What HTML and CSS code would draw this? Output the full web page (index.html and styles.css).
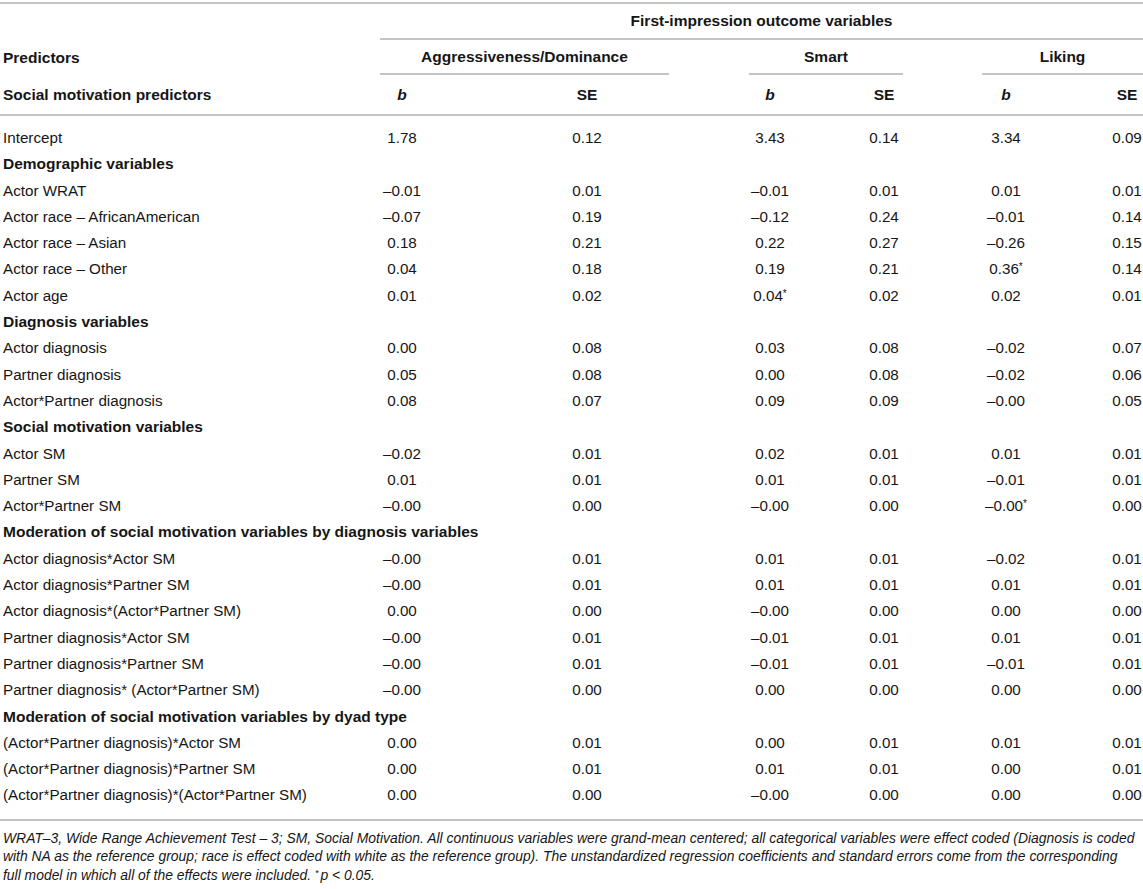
FILE: index.html
```html
<!DOCTYPE html>
<html lang="en">
<head>
<meta charset="utf-8">
<title>First-impression outcome variables</title>
<link rel="stylesheet" href="styles.css">
</head>
<body>
<table class="results">
  <colgroup>
    <col class="c-label">
    <col class="c-b1">
    <col class="c-se1">
    <col class="c-b2">
    <col class="c-se2">
    <col class="c-b3">
    <col class="c-se3">
  </colgroup>
  <thead>
    <tr class="row-top">
      <th class="blank"></th>
      <th colspan="6" class="outcome">First-impression outcome variables</th>
    </tr>
    <tr class="row-groups">
      <th class="label">Predictors</th>
      <th colspan="2" class="grp-cell"><span class="grp grp-aggr">Aggressiveness/Dominance</span></th>
      <th colspan="2" class="grp-cell"><span class="grp grp-smart">Smart</span></th>
      <th colspan="2" class="grp-cell"><span class="grp grp-liking">Liking</span></th>
    </tr>
    <tr class="row-stats">
      <th class="label">Social motivation predictors</th>
      <th><i>b</i></th>
      <th>SE</th>
      <th><i>b</i></th>
      <th>SE</th>
      <th><i>b</i></th>
      <th class="last">SE</th>
    </tr>
  </thead>
  <tbody>
    <tr class="first"><td class="label">Intercept</td><td>1.78</td><td>0.12</td><td>3.43</td><td>0.14</td><td>3.34</td><td class="last">0.09</td></tr>
    <tr class="section"><td colspan="7">Demographic variables</td></tr>
    <tr><td class="label">Actor WRAT</td><td>–0.01</td><td>0.01</td><td>–0.01</td><td>0.01</td><td>0.01</td><td class="last">0.01</td></tr>
    <tr><td class="label">Actor race – AfricanAmerican</td><td>–0.07</td><td>0.19</td><td>–0.12</td><td>0.24</td><td>–0.01</td><td class="last">0.14</td></tr>
    <tr><td class="label">Actor race – Asian</td><td>0.18</td><td>0.21</td><td>0.22</td><td>0.27</td><td>–0.26</td><td class="last">0.15</td></tr>
    <tr><td class="label">Actor race – Other</td><td>0.04</td><td>0.18</td><td>0.19</td><td>0.21</td><td>0.36<sup>*</sup></td><td class="last">0.14</td></tr>
    <tr><td class="label">Actor age</td><td>0.01</td><td>0.02</td><td>0.04<sup>*</sup></td><td>0.02</td><td>0.02</td><td class="last">0.01</td></tr>
    <tr class="section"><td colspan="7">Diagnosis variables</td></tr>
    <tr><td class="label">Actor diagnosis</td><td>0.00</td><td>0.08</td><td>0.03</td><td>0.08</td><td>–0.02</td><td class="last">0.07</td></tr>
    <tr><td class="label">Partner diagnosis</td><td>0.05</td><td>0.08</td><td>0.00</td><td>0.08</td><td>–0.02</td><td class="last">0.06</td></tr>
    <tr><td class="label">Actor*Partner diagnosis</td><td>0.08</td><td>0.07</td><td>0.09</td><td>0.09</td><td>–0.00</td><td class="last">0.05</td></tr>
    <tr class="section"><td colspan="7">Social motivation variables</td></tr>
    <tr><td class="label">Actor SM</td><td>–0.02</td><td>0.01</td><td>0.02</td><td>0.01</td><td>0.01</td><td class="last">0.01</td></tr>
    <tr><td class="label">Partner SM</td><td>0.01</td><td>0.01</td><td>0.01</td><td>0.01</td><td>–0.01</td><td class="last">0.01</td></tr>
    <tr><td class="label">Actor*Partner SM</td><td>–0.00</td><td>0.00</td><td>–0.00</td><td>0.00</td><td>–0.00<sup>*</sup></td><td class="last">0.00</td></tr>
    <tr class="section"><td colspan="7">Moderation of social motivation variables by diagnosis variables</td></tr>
    <tr><td class="label">Actor diagnosis*Actor SM</td><td>–0.00</td><td>0.01</td><td>0.01</td><td>0.01</td><td>–0.02</td><td class="last">0.01</td></tr>
    <tr><td class="label">Actor diagnosis*Partner SM</td><td>–0.00</td><td>0.01</td><td>0.01</td><td>0.01</td><td>0.01</td><td class="last">0.01</td></tr>
    <tr><td class="label">Actor diagnosis*(Actor*Partner SM)</td><td>0.00</td><td>0.00</td><td>–0.00</td><td>0.00</td><td>0.00</td><td class="last">0.00</td></tr>
    <tr><td class="label">Partner diagnosis*Actor SM</td><td>–0.00</td><td>0.01</td><td>–0.01</td><td>0.01</td><td>0.01</td><td class="last">0.01</td></tr>
    <tr><td class="label">Partner diagnosis*Partner SM</td><td>–0.00</td><td>0.01</td><td>–0.01</td><td>0.01</td><td>–0.01</td><td class="last">0.01</td></tr>
    <tr><td class="label">Partner diagnosis* (Actor*Partner SM)</td><td>–0.00</td><td>0.00</td><td>0.00</td><td>0.00</td><td>0.00</td><td class="last">0.00</td></tr>
    <tr class="section"><td colspan="7">Moderation of social motivation variables by dyad type</td></tr>
    <tr><td class="label">(Actor*Partner diagnosis)*Actor SM</td><td>0.00</td><td>0.01</td><td>0.00</td><td>0.01</td><td>0.01</td><td class="last">0.01</td></tr>
    <tr><td class="label">(Actor*Partner diagnosis)*Partner SM</td><td>0.00</td><td>0.01</td><td>0.01</td><td>0.01</td><td>0.00</td><td class="last">0.01</td></tr>
    <tr class="final"><td class="label">(Actor*Partner diagnosis)*(Actor*Partner SM)</td><td>0.00</td><td>0.00</td><td>–0.00</td><td>0.00</td><td>0.00</td><td class="last">0.00</td></tr>
  </tbody>
</table>
<p class="note">WRAT–3, Wide Range Achievement Test – 3; SM, Social Motivation. All continuous variables were grand-mean centered; all categorical variables were effect coded (Diagnosis is coded<br>with NA as the reference group; race is effect coded with white as the reference group). The unstandardized regression coefficients and standard errors come from the corresponding<br>full model in which all of the effects were included. <sup>*</sup><span class="p">p</span> &lt; 0.05.</p>
</body>
</html>
```

FILE: styles.css
```css
html, body {
  margin: 0;
  padding: 0;
  background: #ffffff;
}

body {
  font-family: "Liberation Sans", Arial, Helvetica, sans-serif;
  color: #161616;
  font-size: 15.2px;
}

.results {
  width: 1143px;
  table-layout: fixed;
  border-collapse: separate;
  border-spacing: 0;
  margin-top: 2px;
  border-top: 2px solid #c4c4c4;
  border-bottom: 2px solid #c4c4c4;
}

.c-label { width: 380px; }
.c-b1 { width: 44px; }
.c-se1 { width: 326px; }
.c-b2 { width: 40px; }
.c-se2 { width: 188px; }
.c-b3 { width: 56px; }
.c-se3 { width: 109px; }

.results th,
.results td {
  padding: 0;
  text-align: center;
  white-space: nowrap;
}

.results th {
  font-weight: bold;
  font-size: 15.5px;
}

.results .label {
  text-align: left;
  padding-left: 3px;
}

.results .last {
  padding-left: 77px;
}

/* header rows */
.row-top th {
  line-height: 34px;
}

.row-top .outcome {
  border-bottom: 2px solid #c4c4c4;
}

.row-groups th {
  line-height: 35px;
}

.row-groups .grp-cell {
  vertical-align: bottom;
  line-height: 0;
}

.grp {
  display: block;
  line-height: 33px;
  border-bottom: 2px solid #c4c4c4;
}

.grp-aggr { margin: 0 81px 0 0; }
.grp-smart { margin: 0 75px 0 -1px; }
.grp-liking { margin: 0 0 0 4px; }

.row-stats th {
  line-height: 39px;
  border-bottom: 2px solid #c4c4c4;
}

/* body rows */
.results td {
  line-height: 26.3px;
}

.results tr.first td {
  padding-top: 9px;
}

.results tr.final td {
  padding-bottom: 10px;
}

.results .section td {
  text-align: left;
  padding-left: 3px;
  font-weight: bold;
  font-size: 15.5px;
}

.results sup {
  font-size: 10px;
  line-height: 0;
  vertical-align: 4px;
}

.note {
  margin: 8px 0 0;
  padding: 0 2px 0 3px;
  font-style: italic;
  font-size: 13.9px;
  line-height: 18.5px;
  white-space: nowrap;
}

.note sup {
  font-size: 9px;
  line-height: 0;
  vertical-align: 4px;
  margin-right: 2px;
}
```
